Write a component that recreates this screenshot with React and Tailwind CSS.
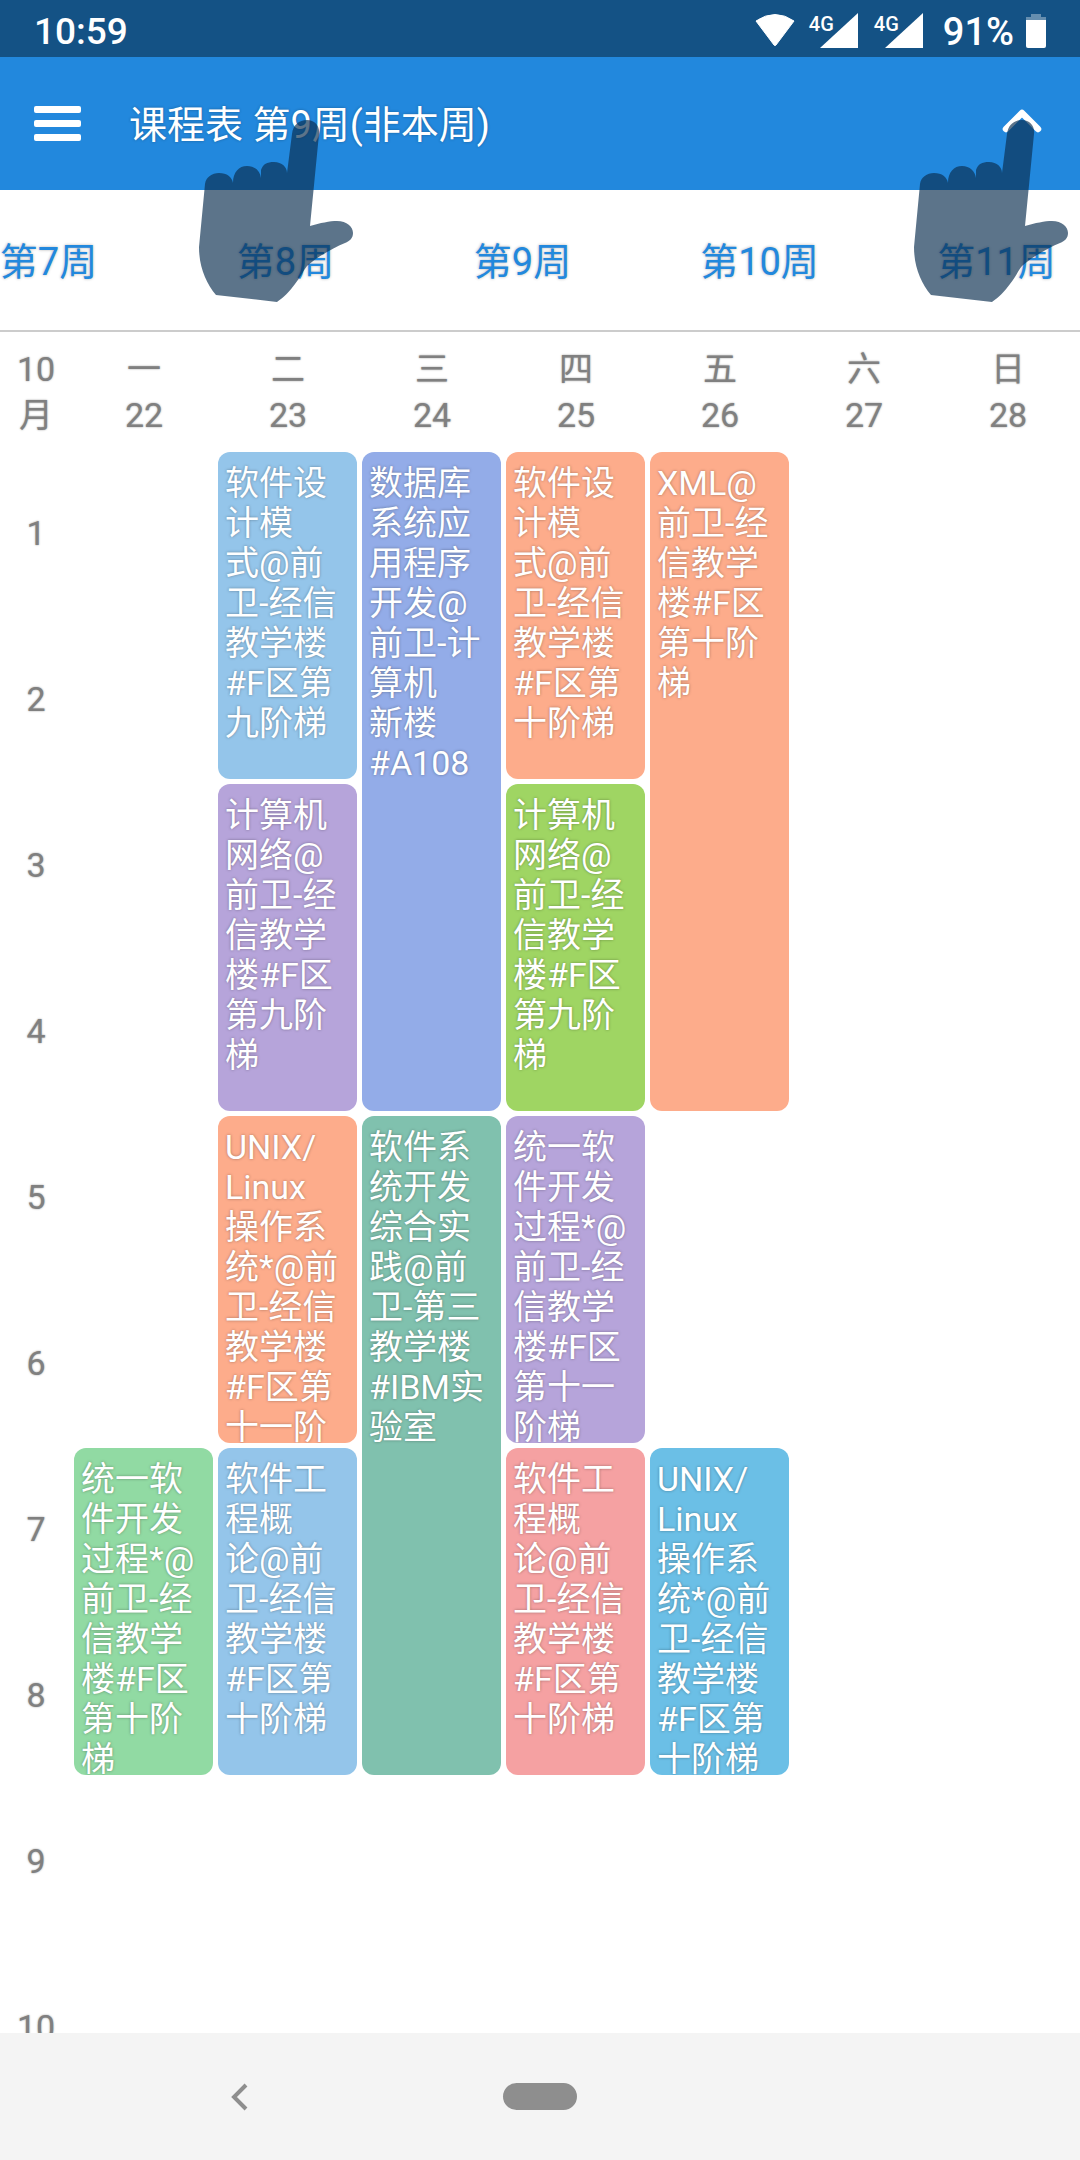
const fontClass = "font-['Roboto','Noto_Sans_CJK_SC',sans-serif]";

const weeks = ["第7周", "第8周", "第9周", "第10周", "第11周"];

const software = (last) => `软件设\n计模\n式@前\n卫-经信\n教学楼\n#F区第\n${last}`;
const network = "计算机\n网络@\n前卫-经\n信教学\n楼#F区\n第九阶\n梯";
const intro = "软件工\n程概\n论@前\n卫-经信\n教学楼\n#F区第\n十阶梯";

const days = [
  { name: "一", date: 22, courses: [
    { row: "row-[7/span_2]", color: "bg-[#91daa3]", text: "统一软\n件开发\n过程*@\n前卫-经\n信教学\n楼#F区\n第十阶\n梯" },
  ] },
  { name: "二", date: 23, courses: [
    { row: "row-[1/span_2]", color: "bg-[#94c5ea]", text: software("九阶梯") },
    { row: "row-[3/span_2]", color: "bg-[#b6a4da]", text: network },
    { row: "row-[5/span_2]", color: "bg-[#fdac8b]", text: "UNIX/\nLinux\n操作系\n统*@前\n卫-经信\n教学楼\n#F区第\n十一阶" },
    { row: "row-[7/span_2]", color: "bg-[#94c5ea]", text: intro },
  ] },
  { name: "三", date: 24, courses: [
    { row: "row-[1/span_4]", color: "bg-[#93ace8]", text: "数据库\n系统应\n用程序\n开发@\n前卫-计\n算机\n新楼\n#A108" },
    { row: "row-[5/span_4]", color: "bg-[#80c1ae]", text: "软件系\n统开发\n综合实\n践@前\n卫-第三\n教学楼\n#IBM实\n验室" },
  ] },
  { name: "四", date: 25, courses: [
    { row: "row-[1/span_2]", color: "bg-[#fdac8b]", text: software("十阶梯") },
    { row: "row-[3/span_2]", color: "bg-[#9fd563]", text: network },
    { row: "row-[5/span_2]", color: "bg-[#b6a4da]", text: "统一软\n件开发\n过程*@\n前卫-经\n信教学\n楼#F区\n第十一\n阶梯" },
    { row: "row-[7/span_2]", color: "bg-[#f5a1a2]", text: intro },
  ] },
  { name: "五", date: 26, courses: [
    { row: "row-[1/span_4]", color: "bg-[#fdac8b]", text: "XML@\n前卫-经\n信教学\n楼#F区\n第十阶\n梯" },
    { row: "row-[7/span_2]", color: "bg-[#6bbfe6]", text: "UNIX/\nLinux\n操作系\n统*@前\n卫-经信\n教学楼\n#F区第\n十阶梯" },
  ] },
  { name: "六", date: 27, courses: [] },
  { name: "日", date: 28, courses: [] },
];

const periods = [1, 2, 3, 4, 5, 6, 7, 8, 9, 10];

function PointerHand({ className }) {
  return (
    <svg className={`pointer-events-none absolute z-10 h-[182px] w-[154px] ${className}`} viewBox="0 0 154 182" aria-hidden="true">
      <path
        d="M93 14C94 5 100 0 108 0C116 0 121 6 120 14L111 106C121 103 131 101 138 101C148 101 154 107 154 113C154 118 151 121 146 123C134 128 118 137 108 146C104 151 101 158 96 164C91 171 84 178 78 182L17 175C7 163 0 147 0 127L6 64C7 57 13 53 20 53C28 53 33 57 34 63C34 52 40 46 48 46C56 46 61 51 62 58L62 50C64 44 68 42 75 42C83 42 88 47 88 53Z"
        fill="#0a2e50"
        fillOpacity="0.665"
      />
    </svg>
  );
}

function Signal() {
  return (
    <div className="flex items-start">
      <span className="text-[20px] leading-[24px] font-medium">4G</span>
      <svg className="-ml-[14px] h-[36px] w-[38px]" viewBox="0 0 38 36" aria-hidden="true">
        <path d="M38 1V36H0Z" fill="white" />
      </svg>
    </div>
  );
}

export default function App() {
  return (
    <div className={`relative flex h-screen flex-col overflow-hidden bg-white ${fontClass}`}>
      <div className="flex h-[57px] shrink-0 items-end justify-between bg-[#145285] px-[34px] pb-[9px] text-white">
        <span className="text-[37px] leading-[32px] font-medium">10:59</span>
        <div className="flex items-end">
          <svg className="mr-[14px] mb-[2px] h-[32px] w-[40px]" viewBox="0 0 40 32" aria-hidden="true">
            <path d="M1 7Q20 -6 39 7L21 31Q20 32 19 31Z" fill="white" stroke="white" />
          </svg>
          <Signal />
          <div className="w-4" />
          <Signal />
          <span className="pl-5 text-[38px] leading-[32px] font-medium">91%</span>
          <svg className="ml-3 h-[34px] w-[20px]" viewBox="0 0 20 34" aria-hidden="true">
            <path d="M5 0H15V3H20V6H0V3H5Z" fill="white" fillOpacity="0.35" />
            <path d="M0 6H20V32Q20 34 18 34H2Q0 34 0 32Z" fill="white" />
          </svg>
        </div>
      </div>

      <header className="flex h-[133px] shrink-0 items-center bg-[#2288dd] px-[34px] text-white">
        <button type="button" aria-label="菜单" className="mr-12 flex flex-col gap-[7px]">
          <span className="h-[7px] w-[47px] rounded-xs bg-white" />
          <span className="h-[7px] w-[47px] rounded-xs bg-white" />
          <span className="h-[7px] w-[47px] rounded-xs bg-white" />
        </button>
        <h1 className="flex-1 pt-0.5 text-[38px] leading-[44px] text-shadow-[0_0_3px_rgb(0_0_0/0.3)]">课程表 第9周(非本周)</h1>
        <button type="button" aria-label="收起" className="mr-1 mb-1.5">
          <svg className="h-[24px] w-[40px]" viewBox="0 0 40 24" fill="none" aria-hidden="true">
            <path d="M4 20L20 4L36 20" stroke="white" strokeWidth="6.5" strokeLinecap="round" strokeLinejoin="round" />
          </svg>
        </button>
      </header>

      <nav className="h-[142px] shrink-0 overflow-hidden border-b-2 border-[#cccccc]">
        <div className="-ml-[70px] flex h-full items-center pt-1">
          {weeks.map((w) => (
            <button key={w} type="button" className="w-[237px] shrink-0 text-center text-[38px] leading-[44px] text-[#2288dd] text-shadow-[0_0_3px_rgb(0_0_0/0.3)]">
              {w}
            </button>
          ))}
        </div>
      </nav>

      <div className="grid h-[120px] shrink-0 grid-cols-[72px_repeat(7,minmax(0,1fr))] pt-[14px] text-center text-[34px] leading-[46px] text-[#808080] text-shadow-[0_0_2px_rgb(0_0_0/0.4)]">
        <div>10<br />月</div>
        {days.map((d) => (
          <div key={d.name}>{d.name}<br />{d.date}</div>
        ))}
      </div>

      <main className="min-h-0 flex-1 overflow-hidden">
        <div className="grid grid-cols-[72px_repeat(7,minmax(0,1fr))]">
          <div className="grid auto-rows-[166px] text-center text-[34px] leading-[40px] text-[#808080] text-shadow-[0_0_2px_rgb(0_0_0/0.4)]">
            {periods.map((p) => (
              <div key={p} className="flex items-center justify-center pb-1">{p}</div>
            ))}
          </div>
          {days.map((d) => (
            <div key={d.name} className="grid grid-rows-[repeat(10,166px)]">
              {d.courses.map((c) => (
                <article key={c.row} className={`mr-[3px] mb-[5px] ml-[2px] overflow-hidden rounded-xl pt-[11px] pl-[7px] text-[34px] leading-[40px] whitespace-pre text-white text-shadow-[0_0_3px_rgb(0_0_0/0.35)] ${c.row} ${c.color}`}>
                  {c.text}
                </article>
              ))}
            </div>
          ))}
        </div>
      </main>

      <footer className="grid h-[127px] shrink-0 grid-cols-[1fr_74px_1fr] items-center bg-[#f4f4f4]">
        <button type="button" aria-label="返回" className="mr-[26px] justify-self-center">
          <svg className="h-[28px] w-[18px]" viewBox="0 0 18 28" fill="none" aria-hidden="true">
            <path d="M16 2L4 14L16 26" stroke="#8e8e8e" strokeWidth="4" />
          </svg>
        </button>
        <button type="button" aria-label="主屏幕" className="h-[27px] rounded-full bg-[#8e8e8e]" />
      </footer>

      <PointerHand className="top-[120px] left-[199px]" />
      <PointerHand className="top-[120px] right-[12px]" />
    </div>
  );
}
